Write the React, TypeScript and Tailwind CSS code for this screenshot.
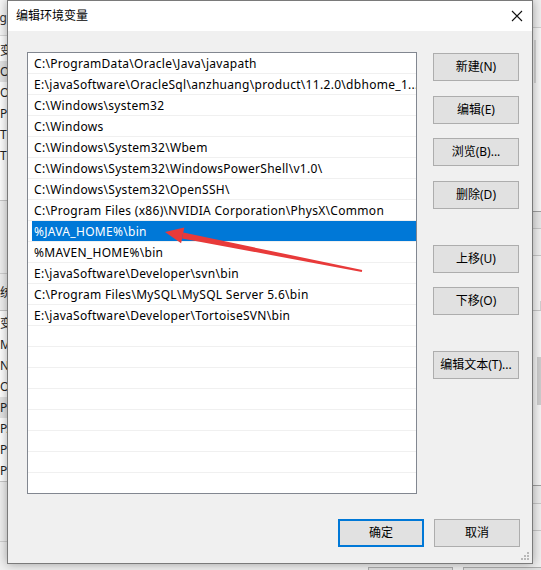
import React from "react";

const FONT = "'Noto Sans','Noto Sans CJK SC',sans-serif";

const items = [
  "C:\\ProgramData\\Oracle\\Java\\javapath",
  "E:\\javaSoftware\\OracleSql\\anzhuang\\product\\11.2.0\\dbhome_1...",
  "C:\\Windows\\system32",
  "C:\\Windows",
  "C:\\Windows\\System32\\Wbem",
  "C:\\Windows\\System32\\WindowsPowerShell\\v1.0\\",
  "C:\\Windows\\System32\\OpenSSH\\",
  "C:\\Program Files (x86)\\NVIDIA Corporation\\PhysX\\Common",
  "%JAVA_HOME%\\bin",
  "%MAVEN_HOME%\\bin",
  "E:\\javaSoftware\\Developer\\svn\\bin",
  "C:\\Program Files\\MySQL\\MySQL Server 5.6\\bin",
  "E:\\javaSoftware\\Developer\\TortoiseSVN\\bin",
];

function Btn({ label, className = "" }: { label: string; className?: string }) {
  return (
    <div
      className={`w-[86px] h-[28px] border border-[#adadad] bg-[#e1e1e1] flex items-center justify-center text-[12px] text-black ${className}`}
    >
      {label}
    </div>
  );
}

function LeftRow({ t, hl = false }: { t: string; hl?: boolean }) {
  return (
    <div className={`h-[21px] flex items-center text-[12px] text-[#222] whitespace-nowrap ${hl ? "bg-[#e5e5e5]" : ""}`}>
      {t}
    </div>
  );
}

export default function App() {
  const rows: (string | null)[] = [];
  for (let i = 0; i < 22; i++) rows.push(i < items.length ? items[i] : null);

  return (
    <div
      className="relative w-[541px] h-[570px] overflow-hidden bg-[#f0f0f0] flex"
      style={{ fontFamily: FONT }}
    >
      {/* left background window strip */}
      <div className="w-[7px] h-full flex flex-col overflow-hidden bg-[#f0f0f0]">
        <div className="h-[35px] bg-[#f7f7f7] flex items-center text-[12px] text-[#333] justify-end">ng</div>
        <div className="h-[1px] bg-[#d9d9d9]" />
        <div className="bg-white flex flex-col pt-[4px]">
          <LeftRow t="变" />
          <LeftRow t="Or" hl />
          <LeftRow t="Or" />
          <LeftRow t="Pa" />
          <LeftRow t="TE" />
          <LeftRow t="TM" />
        </div>
        <div className="h-[34px] bg-white" />
        <div className="h-[1px] bg-[#c8c8c8]" />
        <div className="h-[72px] bg-[#f0f0f0]" />
        <div className="h-[1px] bg-[#d0d0d0]" />
        <div className="h-[36px] pt-[2px] flex items-center text-[12px] text-[#222]">统</div>
        <div className="h-[1px] bg-[#c8c8c8]" />
        <div className="bg-white flex flex-col pt-[2px]">
          <LeftRow t="变" />
          <LeftRow t="MA" />
          <LeftRow t="NU" />
          <LeftRow t="OS" />
          <LeftRow t="Pa" hl />
          <LeftRow t="PA" />
          <LeftRow t="PE" />
          <LeftRow t="PR" />
        </div>
        <div className="h-[1px] bg-[#c8c8c8]" />
        <div className="h-[59px]" />
        <div className="h-[1px] bg-[#d0d0d0]" />
      </div>

      {/* dialog */}
      <div className="relative w-[526px] h-[564px] border border-[#7a7a7a] bg-[#f0f0f0] flex flex-col shadow-[0_0_10px_rgba(0,0,0,0.35)] z-10">
        {/* title bar */}
        <div className="h-[30px] bg-white flex items-center justify-between pl-[8px] pr-[8px]">
          <span className="text-[12px] text-black">编辑环境变量</span>
          <svg width="12" height="12" viewBox="0 0 12 12" className="mr-[1px]">
            <path d="M1 1 L11 11 M11 1 L1 11" stroke="#111" strokeWidth="1.1" fill="none" />
          </svg>
        </div>

        {/* body */}
        <div className="flex pl-[19px] pt-[21px]">
          <div className="w-[390px] h-[442px] border border-[#828790] bg-white overflow-hidden">
            {rows.map((r, i) => (
              <div key={i} className="h-[21px] border-b border-[#f0f0f0] flex">
                <div
                  className={`ml-[4px] flex-1 h-[20px] flex items-center pl-[2px] pt-[2px] text-[12px] tracking-[0.3px] whitespace-nowrap ${
                    i === 8 ? "bg-[#0078d7] text-white" : "text-black"
                  }`}
                >
                  {r ?? ""}
                </div>
              </div>
            ))}
          </div>
          <div className="ml-[16px] flex flex-col">
            <Btn label="新建(N)" className="mt-[1px]" />
            <Btn label="编辑(E)" className="mt-[15px]" />
            <Btn label="浏览(B)..." className="mt-[14px]" />
            <Btn label="删除(D)" className="mt-[15px]" />
            <Btn label="上移(U)" className="mt-[36px]" />
            <Btn label="下移(O)" className="mt-[14px]" />
            <Btn label="编辑文本(T)..." className="mt-[36px]" />
          </div>
        </div>

        {/* bottom buttons */}
        <div className="flex justify-end gap-[10px] pr-[12px] mt-[25px]">
          <div className="w-[86px] h-[28px] border-2 border-[#0078d7] bg-[#e1e1e1] flex items-center justify-center text-[12px] text-black">
            确定
          </div>
          <Btn label="取消" />
        </div>

        {/* resize grip */}
        <svg width="10" height="10" viewBox="0 0 10 10" className="absolute right-[2px] bottom-[2px]">
          <rect x="7" y="1" width="2" height="2" fill="#b8b8b8" />
          <rect x="4" y="4" width="2" height="2" fill="#b8b8b8" />
          <rect x="7" y="4" width="2" height="2" fill="#b8b8b8" />
          <rect x="1" y="7" width="2" height="2" fill="#b8b8b8" />
          <rect x="4" y="7" width="2" height="2" fill="#b8b8b8" />
          <rect x="7" y="7" width="2" height="2" fill="#b8b8b8" />
        </svg>
      </div>

      {/* right background strip */}
      <div className="flex-1 h-full flex flex-col bg-[#f0f0f0]">
        <div className="h-[27px]" />
        <div className="h-[1px] bg-[#d0d0d0]" />
        <div className="h-[183px] bg-[#f7f7f7] flex">
          <div className="ml-[1px] mt-[12px] w-[2px] h-[43px] bg-[#d6d6d6]" />
        </div>
        <div className="h-[1px] bg-[#a0a0a0]" />
        <div className="h-[16px] bg-[#e8e8e8]" />
        <div className="h-[1px] bg-[#c8c8c8]" />
        <div className="h-[26px] bg-[#f0f0f0]" />
        <div className="h-[1px] bg-[#c8c8c8]" />
        <div className="h-[54px] bg-[#f5f5f5] flex justify-end">
          <div className="mt-[45px] w-[1px] h-[9px] bg-[#d0d0d0]" />
        </div>
        <div className="h-[1px] bg-[#c8c8c8]" />
        <div className="h-[174px] bg-[#f5f5f5] flex justify-end">
          <div className="mt-[46px] w-[4px] h-[48px] bg-[#cdcdcd]" />
        </div>
        <div className="h-[1px] bg-[#a0a0a0]" />
        <div className="h-[17px] bg-[#ececec]" />
        <div className="h-[1px] bg-[#c8c8c8]" />
        <div className="h-[26px]" />
        <div className="h-[1px] bg-[#c8c8c8]" />
        <div className="flex-1" />
      </div>

      {/* bottom peek of window buttons below */}
      <div className="absolute left-[368px] top-[567px] w-[85px] h-[10px] border border-[#adadad] bg-[#e1e1e1]" />
      <div className="absolute left-[463px] top-[567px] w-[85px] h-[10px] border border-[#adadad] bg-[#e1e1e1]" />

      {/* red annotation arrow */}
      <svg className="absolute left-0 top-0 z-20 pointer-events-none" width="541" height="570" viewBox="0 0 541 570">
        <polygon
          points="183.3,232.6 362.2,270.0 361.8,272.0 182.1,238.4"
          fill="#e83a3a"
        />
        <polygon points="165,232 184.3,227.6 181.1,243.3" fill="#e83a3a" />
      </svg>
    </div>
  );
}
